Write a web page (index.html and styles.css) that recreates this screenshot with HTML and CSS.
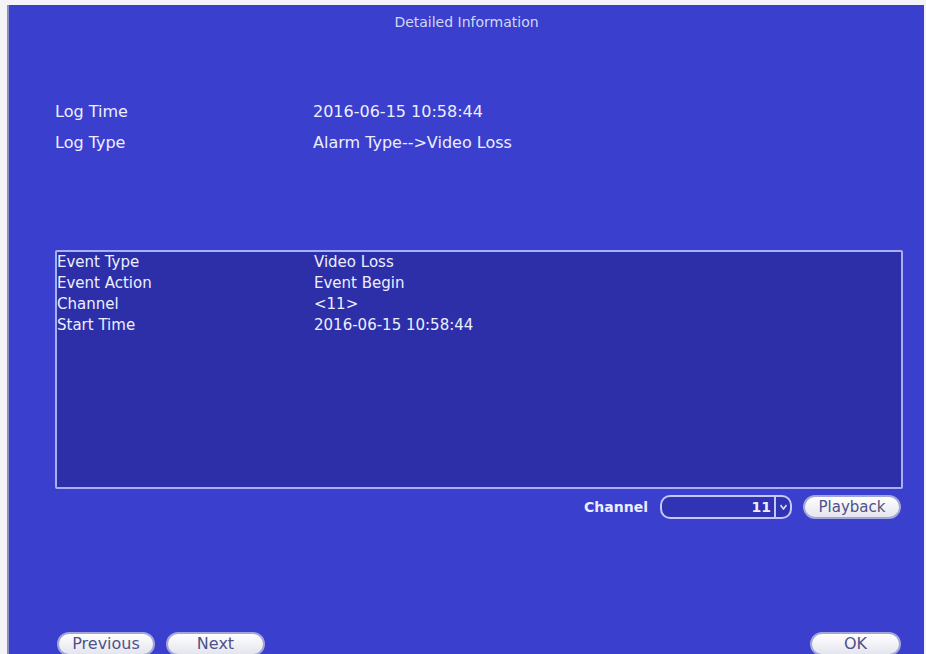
FILE: index.html
```html
<!DOCTYPE html>
<html lang="en">
<head>
    <meta charset="UTF-8">
    <title>Detailed Information</title>
    <link rel="stylesheet" href="styles.css">
</head>
<body>

<div class="screen">
    <div class="title">Detailed Information</div>

    <!-- log summary -->
    <div class="info">
        <div class="info-row">
            <span class="info-label">Log Time</span>
            <span class="info-value">2016-06-15 10:58:44</span>
        </div>
        <div class="info-row">
            <span class="info-label">Log Type</span>
            <span class="info-value">Alarm Type--&gt;Video Loss</span>
        </div>
    </div>

    <!-- event details list -->
    <div class="detail-box">
        <div class="detail-row">
            <span class="detail-label">Event Type</span>
            <span class="detail-value">Video Loss</span>
        </div>
        <div class="detail-row">
            <span class="detail-label">Event Action</span>
            <span class="detail-value">Event Begin</span>
        </div>
        <div class="detail-row">
            <span class="detail-label">Channel</span>
            <span class="detail-value">&lt;11&gt;</span>
        </div>
        <div class="detail-row">
            <span class="detail-label">Start Time</span>
            <span class="detail-value">2016-06-15 10:58:44</span>
        </div>
    </div>

    <div class="channel-row">
        <span class="channel-label">Channel</span>
        <div class="select">
            <span class="select-value">11</span>
            <span class="select-arrow">
                <svg width="7" height="6" viewBox="0 0 7 6"><path d="M0.5 1 L3.5 5 L6.5 1" fill="none" stroke="#d6dafa" stroke-width="1.6"/></svg>
            </span>
        </div>
        <button class="btn btn-playback">Playback</button>
    </div>

    <div class="footer">
        <div class="footer-left">
            <button class="btn btn-prev">Previous</button>
            <button class="btn btn-next">Next</button>
        </div>
        <button class="btn btn-ok">OK</button>
    </div>
</div>

</body>
</html>
```

FILE: styles.css
```css
* {
    box-sizing: border-box;
}

body {
    margin: 0;
    padding: 0;
    background-color: #f4f4f8;
    font-family: "DejaVu Sans", Verdana, sans-serif;
    overflow: hidden;
}

.screen {
    display: flex;
    flex-direction: column;
    margin: 5px 2px 0 7px;
    height: 660px;
    background-color: #3a3fcd;
    border-left: 2px solid #8b8fc4;
    color: #eceeff;
    overflow: hidden;
}

.title {
    padding-top: 8px;
    height: 26px;
    line-height: 18px;
    text-align: center;
    font-size: 14px;
    color: #d3d7f6;
}

/* Log time / log type */
.info {
    margin-top: 65px;
    padding-left: 46px;
}

.info-row {
    display: flex;
    height: 31px;
    line-height: 31px;
    font-size: 16px;
}

.info-label {
    width: 258px;
}

/* Event list box */
.detail-box {
    margin: 92px 21px 0 46px;
    height: 239px;
    background-color: #2c2fa8;
    border: 2px solid #a9b0f2;
    border-radius: 2px;
}

.detail-row {
    display: flex;
    height: 21px;
    line-height: 21px;
    font-size: 15px;
}

.detail-label {
    width: 257px;
}

/* Channel selector + playback */
.channel-row {
    display: flex;
    justify-content: flex-end;
    align-items: center;
    margin: 6px 23px 0 0;
    height: 24px;
}

.channel-label {
    font-size: 14px;
    font-weight: bold;
    margin-right: 12px;
}

.select {
    display: flex;
    align-items: center;
    justify-content: flex-end;
    width: 132px;
    height: 24px;
    border: 2px solid #c3c8f6;
    border-radius: 10px;
    background-color: #3034b4;
    margin-right: 11px;
}

.select-value {
    font-size: 14px;
    font-weight: bold;
    padding-right: 3px;
    border-right: 2px solid #c3c8f6;
    line-height: 20px;
}

.select-arrow {
    display: flex;
    align-items: center;
    justify-content: center;
    width: 14px;
    height: 20px;
}

/* Pill buttons */
.btn {
    height: 24px;
    border: 2px solid #a2a7d8;
    border-radius: 12px;
    background: linear-gradient(#ffffff, #e4e5ee);
    color: #4e5288;
    font-family: "DejaVu Sans", Verdana, sans-serif;
    font-size: 16px;
    padding: 0;
    line-height: 20px;
}

.btn-playback {
    width: 98px;
    font-size: 15px;
}

.footer {
    display: flex;
    justify-content: space-between;
    margin: auto 23px 9px 48px;
}

.footer-left {
    display: flex;
    gap: 11px;
}

.btn-prev {
    width: 98px;
}

.btn-next {
    width: 99px;
}

.btn-ok {
    width: 91px;
}
```
